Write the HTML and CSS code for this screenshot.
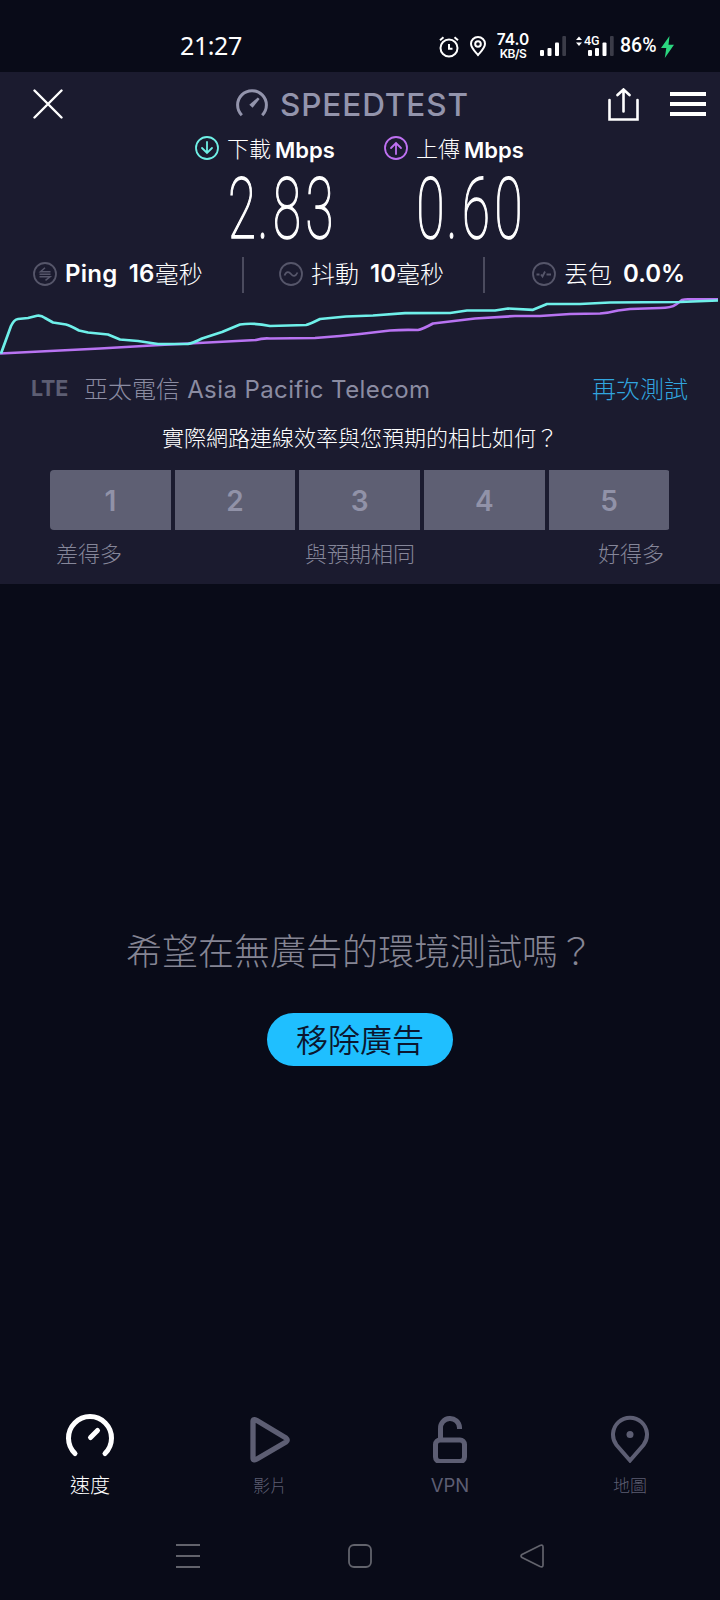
FILE: index.html
```html
<!DOCTYPE html>
<html lang="zh-Hant">
<head>
<meta charset="utf-8">
<title>Speedtest</title>
<link rel="stylesheet" href="styles.css">
</head>
<body>
<div class="screen">
  <div class="status">
    <span class="clock">21:27</span>
    <div class="status-icons">
      <svg class="i-alarm" width="20" height="22" viewBox="0 0 20 22" fill="none" stroke="#fff" stroke-width="2"><circle cx="10" cy="12" r="8.5"/><path d="M10 8v4.800h3.500M1 4.200 4.500 1.300M19 4.200l-3.500-2.900" /></svg>
      <svg class="i-pin" width="16" height="21" viewBox="0 0 16 21" fill="none" stroke="#fff" stroke-width="2"><path d="M8 19C5 15.500 1 12 1 7.800a7 6.800 0 0 1 14 0C15 12 11 15.500 8 19Z"/><circle cx="8" cy="8" r="2.800"/></svg>
      <div class="rate"><b>74.0</b><b class="unit">KB/S</b></div>
      <svg class="i-sig" width="26" height="20" viewBox="0 0 26 20" fill="#fff"><rect y="14" width="4" height="6" rx="1"/><rect x="7.500" y="12" width="4" height="8" rx="1"/><rect x="15" y="6.500" width="4" height="13.500" rx="1"/><rect x="22.300" width="3.700" height="20" rx="1" fill="#3b3c48"/></svg>
      <div class="lte">
        <svg width="38" height="20" viewBox="0 0 38 20" fill="#fff"><path d="m0 4 3-3.500L6 4zM0 6.500 3 10l3-3.500z"/><rect x="12" y="14" width="4" height="6" rx="1"/><rect x="19" y="12" width="4" height="8" rx="1"/><rect x="26.500" y="6.500" width="4" height="13.500" rx="1"/><rect x="34" width="3.700" height="20" rx="1" fill="#3b3c48"/></svg>
        <span class="g4">4G</span>
      </div>
      <span class="batt">86%</span>
      <svg class="i-bolt" width="13" height="22" viewBox="0 0 13 22"><path d="M8.500 0 0 12h5.300L3.800 22 13 8.800H7.500z" fill="#2bd67f"/></svg>
    </div>
  </div>

  <main class="panel">
    <header class="bar">
      <svg width="30" height="30" viewBox="0 0 30 30" stroke="#fff" stroke-width="2.400" stroke-linecap="round"><path d="m1.500 1.500 27 27M28.500 1.500l-27 27"/></svg>
      <div class="brand">
        <svg width="32" height="28" viewBox="0 0 32 28"><path d="M5.800 26.200A14.400 14.400 0 1 1 26.200 26.200" fill="none" stroke="#9394ac" stroke-width="3"/><path d="m21.800 8.500 1.800 1.500-7 8.800-3.300-3z" fill="#9394ac"/></svg>
        <span>SPEEDTEST</span>
      </div>
      <svg class="share" width="32" height="33" viewBox="0 0 32 33" fill="none" stroke="#fff" stroke-width="2.600"><path d="M1.500 12v19.500h28V12" stroke-linecap="round"/><path d="M15.500 23.500V2M9.500 7l6-5.500 6 5.500" stroke-linecap="round"/></svg>
      <svg class="menu" width="36" height="24" viewBox="0 0 36 24" fill="#fff"><path d="M0 0h36v4H0zM0 10h36v4H0zM0 20h36v4H0z"/></svg>
    </header>

    <section class="results">
      <div class="result">
        <div class="rlabel">
          <svg width="24" height="24" viewBox="0 0 24 24" fill="none" stroke="#6ff0e6" stroke-width="1.800"><circle cx="12" cy="12" r="11"/><path d="M12 6v11M7 12l5 5 5-5" stroke-linecap="round"/></svg>
          <span class="cjk">下載</span><b>Mbps</b>
        </div>
        <svg class="digits" width="106" height="70" viewBox="0 0 106 70"><text transform="scale(.6 1)" x="0 49 75 129" y="63">2.83</text></svg>
      </div>
      <div class="result">
        <div class="rlabel">
          <svg width="24" height="24" viewBox="0 0 24 24" fill="none" stroke="#bf71f2" stroke-width="1.800"><circle cx="12" cy="12" r="11"/><path d="M12 18V7M7 12l5-5 5 5" stroke-linecap="round"/></svg>
          <span class="cjk">上傳</span><b>Mbps</b>
        </div>
        <svg class="digits" width="106" height="70" viewBox="0 0 106 70"><text transform="scale(.6 1)" x="-1 49 75 129" y="63">0.60</text></svg>
      </div>
    </section>

    <section class="stats">
      <div class="stat ping">
        <svg width="24" height="24" viewBox="0 0 24 24" fill="none" stroke="#56566a" stroke-width="1.800"><circle cx="12" cy="12" r="11"/><path d="M17.500 9.800H7.500L12 5.800M6.500 14.800h10.500L12.500 18.300M6.500 12.300h11" stroke-width="1.500"/></svg>
        <b>Ping</b><b class="val">16</b><span>毫秒</span>
      </div>
      <div class="stat jitter">
        <svg width="24" height="24" viewBox="0 0 24 24" fill="none" stroke="#56566a" stroke-width="1.800"><circle cx="12" cy="12" r="11"/><path d="M5.500 13.500c2-4.500 4.500-4 6.500-1.500s4.500 3 6.500-1.500"/></svg>
        <span>抖動</span><b class="val">10</b><span>毫秒</span>
      </div>
      <div class="stat loss">
        <svg width="24" height="24" viewBox="0 0 24 24" fill="none" stroke="#56566a" stroke-width="1.800"><circle cx="12" cy="12" r="11"/><path d="M4.500 12.500h3M9 12.500l1.500 2 2.500-5M14.500 12.500h4.500"/></svg>
        <span>丟包</span><b class="val">0.0%</b>
      </div>
    </section>

    <svg class="chart" width="720" height="64" viewBox="0 294 720 64" fill="none" stroke-width="2.700" stroke-linejoin="round">
      <path stroke="#b873f2" d="M0 353.500 50 351 100 348.500 160 345 256 340Q262 338 270 338.500L315 338 340 336 360 334 390 330.500Q403 329.500 418 330Q422 329.500 433 323.500L475 318.500 515 316H540L570 314 600 313.500Q608 313 618 310.500L630 309 660 308Q671 308 676 304.500L682 300Q685 299 690 299.300H718"/>
      <path stroke="#6ff0ea" d="M1 353.500 11 326Q14 319.500 18 319L28 318 37 315.800Q41 315 45 318L53 322.500 66 324.500Q70 325.500 79 330.500L88 332.500 108 334.500 120 339.500 138 341 158 344H188Q192 343.500 202 338.500L222 332 240 324.500Q254 322.500 270 326L306 325Q309 324.500 320 319L346 316.500 373 315.500 405 313.200 450 313 467 310.500H495L508 308.500 533 309.800 547 304H580L610 302.500 680 302 718 300.500"/>
    </svg>

    <div class="provider"><b>LTE</b><span class="isp"><i>亞太電信</i> Asia Pacific Telecom</span><span class="again">再次測試</span></div>
    <div class="question">實際網路連線效率與您預期的相比如何？</div>
    <div class="scores"><span>1</span><span>2</span><span>3</span><span>4</span><span>5</span></div>
    <div class="scale"><span>差得多</span><span>與預期相同</span><span>好得多</span></div>
  </main>

  <section class="promo">
    <div class="offer">希望在無廣告的環境測試嗎？</div>
    <div class="remove">移除廣告</div>
  </section>

  <nav class="tabs">
    <div class="tab on">
      <svg width="50" height="50" viewBox="0 0 50 50" fill="none" stroke="#fff" stroke-width="5" stroke-linecap="round"><path d="M10 40.500A21.500 21.500 0 1 1 40 40.500M25.500 24.500l7-7"/></svg>
      <span>速度</span>
    </div>
    <div class="tab">
      <svg width="50" height="50" viewBox="0 0 50 50" fill="none" stroke="#5d5e73" stroke-width="5.300" stroke-linejoin="round"><path d="M8 8.500Q8 5.500 11.500 7.300L41 25q2.500 2 0 4L11.500 46.200Q8 48 8 45z"/></svg>
      <span>影片</span>
    </div>
    <div class="tab">
      <svg width="50" height="50" viewBox="0 0 50 50" fill="none" stroke="#5d5e73" stroke-width="5"><rect x="10.500" y="27" width="29" height="21.500" rx="4.500"/><path d="M15.500 26V15.500a9.500 9.500 0 0 1 19-1V16"/></svg>
      <span class="vpn">VPN</span>
    </div>
    <div class="tab">
      <svg width="50" height="50" viewBox="0 0 50 50" fill="none" stroke="#5d5e73" stroke-width="4"><path d="M25 47.500 11.500 32A17 17 0 1 1 38.500 32Z"/><circle cx="25" cy="21.500" r="3.500" fill="#5d5e73" stroke="none"/></svg>
      <span>地圖</span>
    </div>
  </nav>

  <div class="system">
    <svg width="24" height="24" viewBox="0 0 24 24" fill="#62636c"><path d="M0 0h24v2H0zM0 11h24v2H0zM0 22h24v2H0z"/></svg>
    <svg width="24" height="24" viewBox="0 0 24 24" fill="none" stroke="#62636c" stroke-width="1.800"><rect x="1" y="1" width="22" height="22" rx="5"/></svg>
    <svg width="24" height="24" viewBox="0 0 24 24" fill="none" stroke="#62636c" stroke-width="1.700"><path d="M20 1.500Q23 .3 23 3v18q0 2.700-3 1.500L2 13.500q-2-1.500 0-3z"/></svg>
  </div>
</div>
</body>
</html>
```

FILE: styles.css
```css
* { box-sizing: border-box; }
body { margin: 0; background: #090b18; }
svg { display: block; flex: none; }
b { font-weight: 600; }
i { font-style: normal; }
.screen {
  width: 720px; height: 1600px; display: flex; flex-direction: column;
  overflow: hidden; background: #090b18; color: #fff;
  font-family: Inter, "Noto Sans CJK TC", sans-serif; font-weight: 300; white-space: nowrap;
}

.status { height: 72px; padding: 36px 46px 0 180px; display: flex; justify-content: space-between; }
.clock { font: 400 25px/18px "Noto Sans", sans-serif; letter-spacing: -0.4px; }
.status-icons { display: flex; height: 22px; }
.i-alarm { margin-right: 11px; }
.i-pin { margin-right: 11px; }
.rate { width: 32px; margin: -3px 11px 0 0; display: flex; flex-direction: column; align-items: center; font-size: 15.5px; line-height: 14px; }
.rate .unit { font-size: 12px; line-height: 13px; letter-spacing: -0.5px; }
.i-sig { margin-right: 10px; }
.lte { position: relative; margin-right: 6px; }
.g4 { position: absolute; left: 8px; top: -1px; font: 500 12.5px/12px Roboto, sans-serif; }
.batt { width: 38px; font: 500 19.5px/19px Roboto, sans-serif; margin-right: 2px; }
.i-bolt { margin-left: 1px; }

.panel { height: 512px; background: #1b1b2f; display: flex; flex-direction: column; }
.bar { height: 60px; padding: 4px 14px 0 33px; display: flex; align-items: center; }
.brand { margin: -2px 0 0 173px; display: flex; align-items: center; gap: 12px; color: #9394ac; font-size: 31.5px; font-weight: 550; letter-spacing: 0.9px; width: 250px; }
.brand span { margin-top: 3px; }
.share { margin: 0 0 0 122px; }
.menu { margin-left: auto; }

.results { height: 118px; padding: 4px 0 0 195px; display: flex; gap: 39px; }
.result { width: 150px; }
.rlabel { height: 24px; display: flex; align-items: center; }
.rlabel .cjk { margin: 2px 5px 0 8px; font-size: 22px; width: 43px; line-height: 24px; }
.rlabel b { font-size: 22px; margin-top: 3px; line-height: 24px; }
.digits { margin: 15px 0 0 33px; overflow: visible; font-family: Roboto, sans-serif; font-size: 85px; font-weight: 100; fill: #fff; stroke: #fff; stroke-width: 1.5px; }

.stats { height: 44px; padding-top: 6px; display: flex; align-items: center; font-size: 24px; }
.stat { height: 36px; display: flex; align-items: center; }
.stat svg { margin: -2px 8px 0 0; }
.stat b, .stat span { margin-top: -3px; }
.stat span { margin-top: -5px; }
.ping { width: 244px; padding-left: 33px; border-right: 2px solid #4b4b5e; }
.ping b { letter-spacing: 0.3px; }
.jitter { width: 241px; padding-left: 35px; border-right: 2px solid #4b4b5e; }
.loss { padding-left: 47px; }
.stat .val { margin-left: 11px; }

.chart { overflow: visible; }
.provider { height: 48px; margin-top: 5px; padding: 0 32px 0 31px; display: flex; align-items: center; color: #8b8ca2; font-size: 24px; }
.provider b { color: #5d5e73; font-size: 21.5px; font-weight: 700; margin: 1px 16px 0 0; letter-spacing: -0.2px; }
.isp { font-weight: 400; letter-spacing: 0.4px; }
.isp i { font-weight: 300; letter-spacing: 0; }
.again { margin-left: auto; color: #31a5df; }
.question { height: 48px; margin-top: 3px; text-align: center; font-size: 22px; line-height: 48px; }
.scores { height: 60px; margin: 8px 50.5px 0 50px; display: grid; grid-template-columns: repeat(5, 1fr); gap: 4px; border-radius: 4px; overflow: hidden; }
.scores span { background: #5e5f73; color: #9192a8; font-size: 28px; font-weight: 600; line-height: 63px; text-align: center; }
.scale { margin: 7px 56px 0; display: flex; justify-content: space-between; font-size: 22px; line-height: 34px; color: #858699; }

.promo { height: 816px; padding-top: 343px; display: flex; flex-direction: column; align-items: center; }
.offer { font-size: 36px; line-height: 50px; color: #858594; }
.remove { width: 186px; height: 53px; margin-top: 36px; border-radius: 27px; background: #1fbfff; color: #0b1730; font-size: 32px; font-weight: 350; line-height: 55px; text-align: center; }

.tabs { height: 122px; padding-top: 13px; display: grid; grid-template-columns: repeat(4, 1fr); }
.tab { display: flex; flex-direction: column; align-items: center; color: #5d5e73; font-size: 17px; line-height: 24px; }
.tab span { margin-top: 11px; }
.on { color: #fff; font-size: 20px; }
.tab .vpn { font-size: 18.5px; font-weight: 400; margin-top: 10px; }
.system { padding: 22px 176px 0; display: flex; justify-content: space-between; }
```
